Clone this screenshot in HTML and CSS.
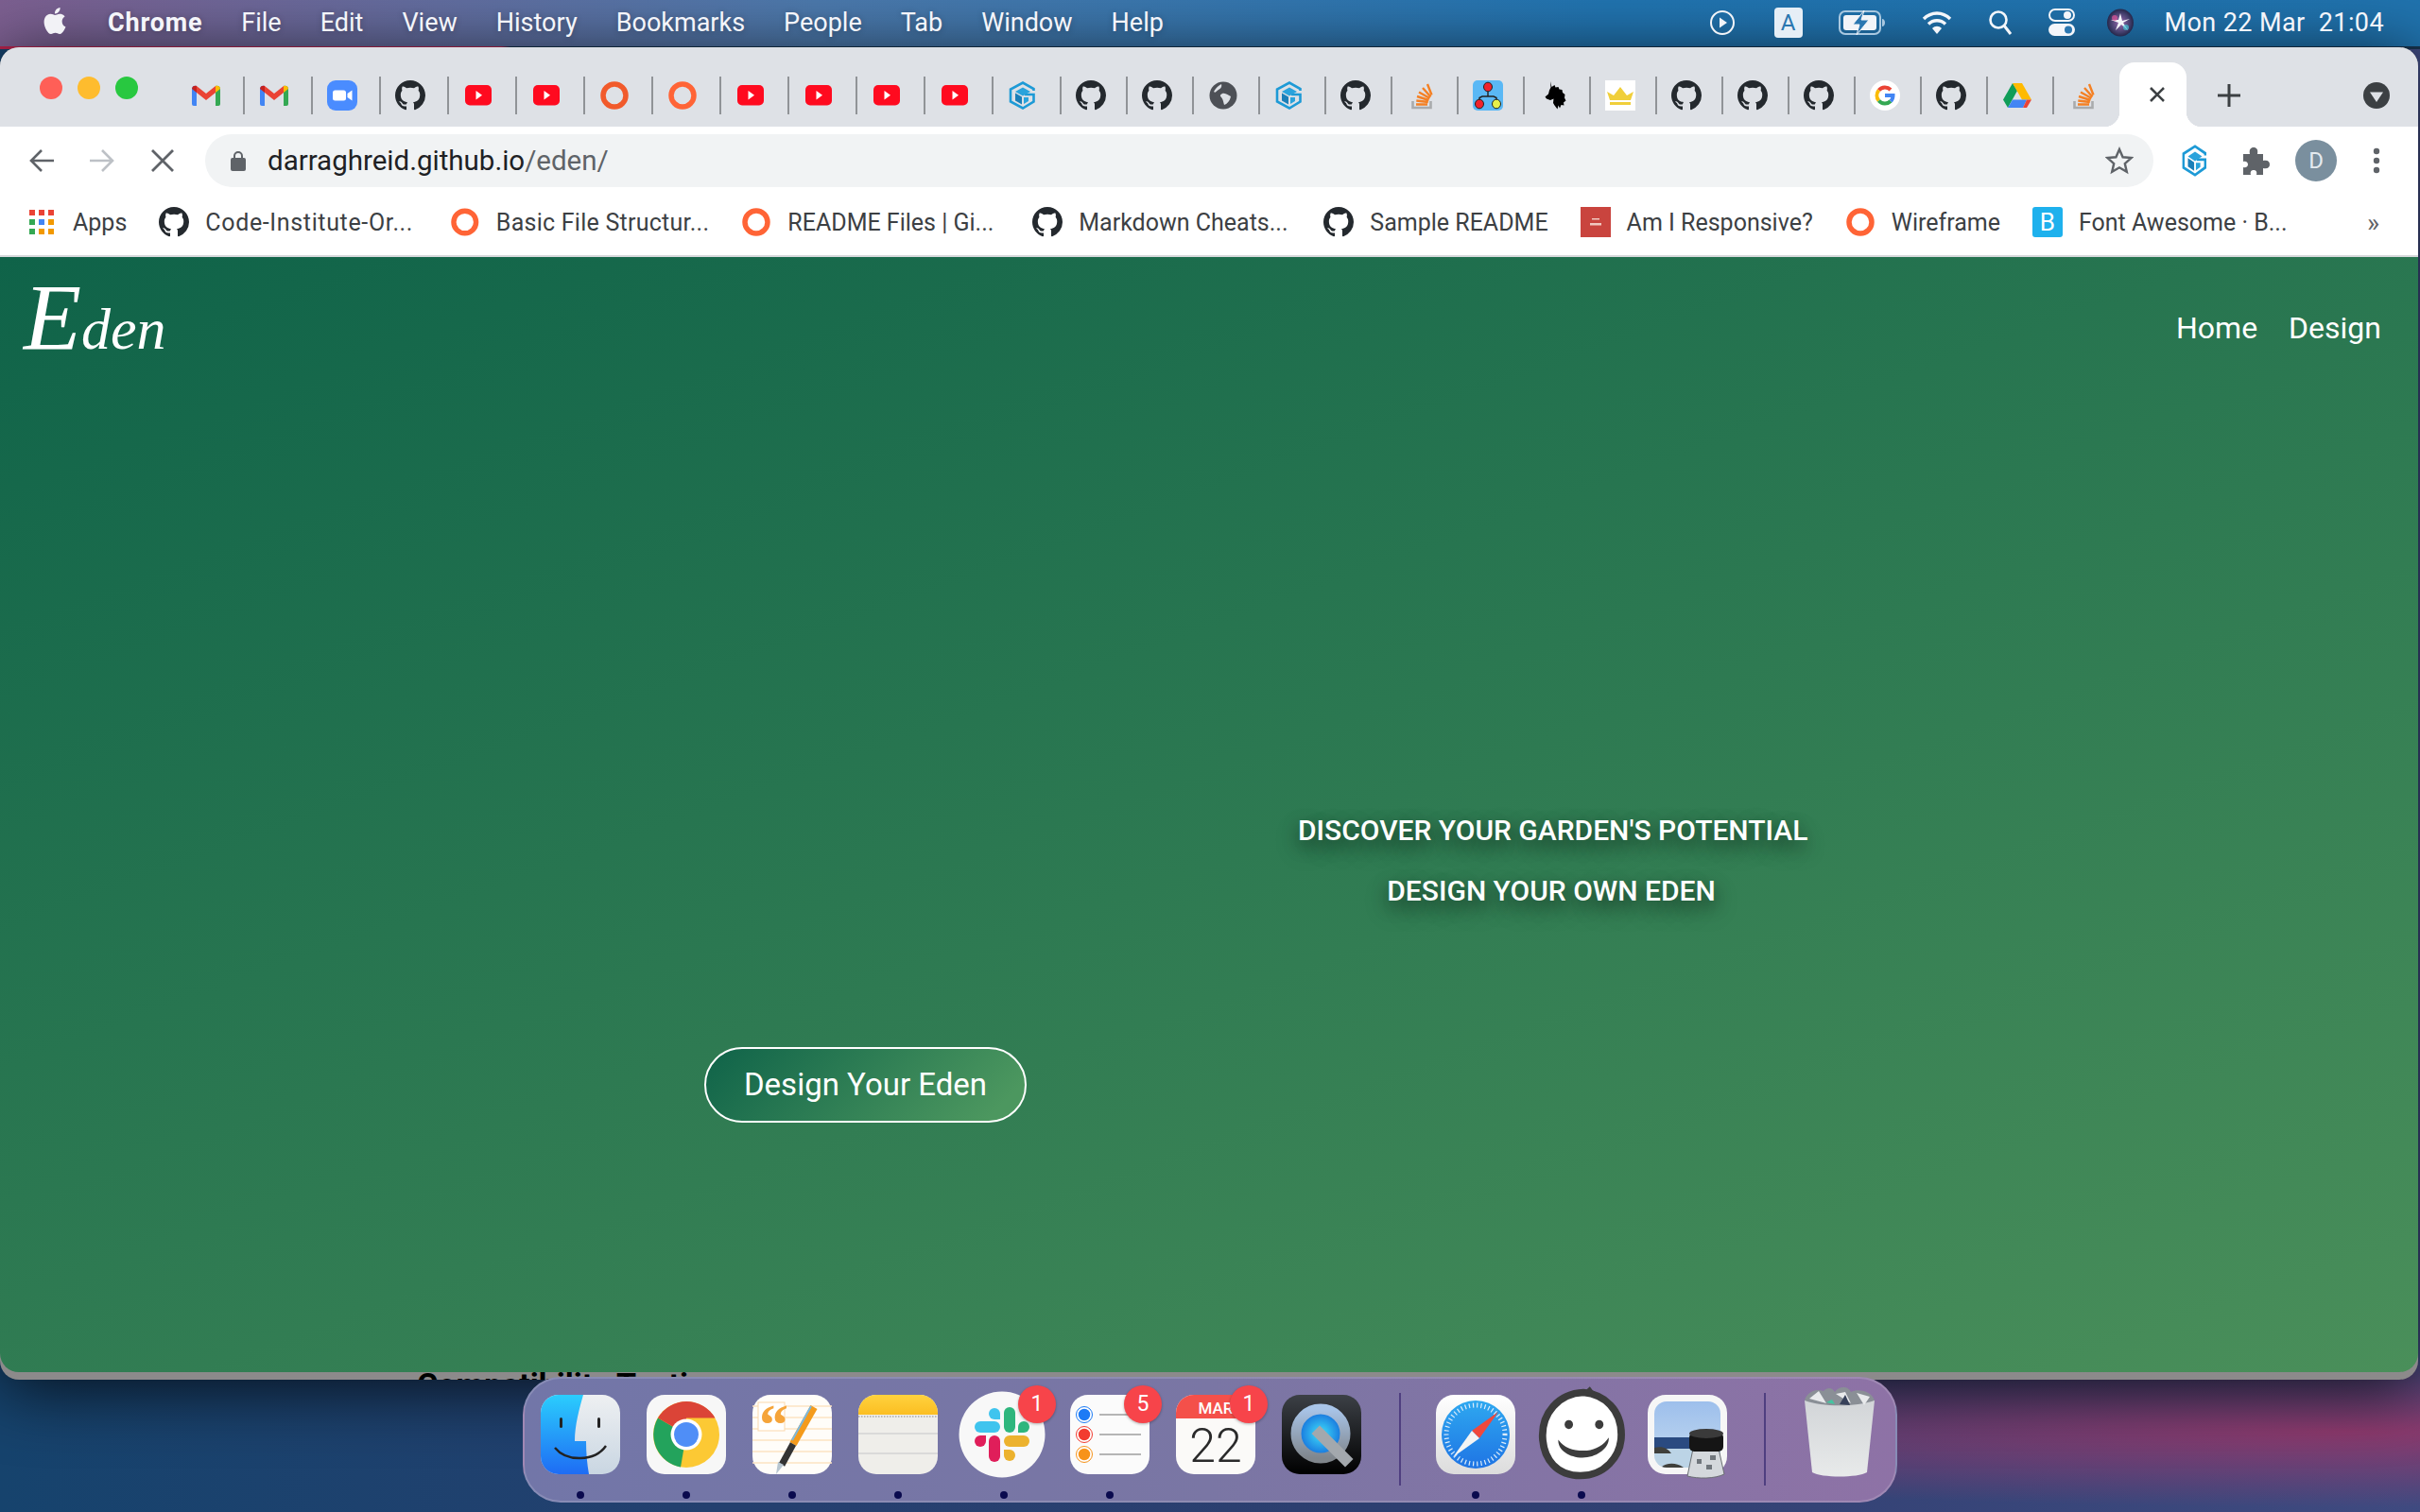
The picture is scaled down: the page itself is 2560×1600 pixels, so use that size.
FILE: index.html
```html
<!DOCTYPE html>
<html lang="en">

<head>
  <meta charset="UTF-8">
  <meta name="viewport" content="width=device-width, initial-scale=1.0">
  <link rel="stylesheet" href="styles.css">
  <title>Eden</title>
</head>

<body>
  <!-- shared tab and bookmark icons -->
  <svg class="sprites" width="0" height="0">
    <symbol id="i-gmail" viewBox="0 0 32 32">
      <path fill="#4285f4" d="M1 9c0-3 3-4 5-3v21H3a2 2 0 0 1-2-2z"/>
      <path fill="#34a853" d="M31 9c0-3-3-4-5-3v21h3a2 2 0 0 0 2-2z"/>
      <path fill="#ea4335" d="M6 6l10 8 10-8v7l-10 8-10-8z"/>
      <path fill="#c5221f" d="M1 9c0-3 3-4 5-3v7z"/>
      <path fill="#fbbc04" d="M31 9c0-3-3-4-5-3v7z"/>
    </symbol>
    <symbol id="i-zoom" viewBox="0 0 32 32">
      <rect width="32" height="32" rx="9" fill="#4a8cff"/>
      <rect x="6" y="10.5" width="14" height="11" rx="2.5" fill="#fff"/>
      <path fill="#fff" d="M21.5 14l5-3.5v11l-5-3.5z"/>
    </symbol>
    <symbol id="i-github" viewBox="0 0 16 16">
      <path fill="#24292e" fill-rule="evenodd" d="M8 0C3.58 0 0 3.58 0 8c0 3.54 2.29 6.53 5.47 7.59.4.07.55-.17.55-.38 0-.19-.01-.82-.01-1.49-2.01.37-2.53-.49-2.69-.94-.09-.23-.48-.94-.82-1.13-.28-.15-.68-.52-.01-.53.63-.01 1.08.58 1.23.82.72 1.21 1.87.87 2.33.66.07-.52.28-.87.51-1.07-1.78-.2-3.64-.89-3.64-3.95 0-.87.31-1.59.82-2.15-.08-.2-.36-1.02.08-2.12 0 0 .67-.21 2.2.82.64-.18 1.32-.27 2-.27.68 0 1.36.09 2 .27 1.53-1.04 2.2-.82 2.2-.82.44 1.1.16 1.92.08 2.12.51.56.82 1.27.82 2.15 0 3.07-1.87 3.75-3.65 3.95.29.25.54.73.54 1.48 0 1.07-.01 1.93-.01 2.2 0 .21.15.46.55.38A8.013 8.013 0 0016 8c0-4.42-3.58-8-8-8z"/>
    </symbol>
    <symbol id="i-youtube" viewBox="0 0 32 32">
      <rect x="2" y="5" width="28" height="21.5" rx="5" fill="#ff0a1f"/>
      <path fill="#fff" d="M13.5 11l6.5 4.8-6.5 4.8z"/>
    </symbol>
    <symbol id="i-ring" viewBox="0 0 32 32">
      <circle cx="16" cy="16" r="12" fill="none" stroke="#f15a2b" stroke-width="5.5"/>
    </symbol>
    <symbol id="i-ring-light" viewBox="0 0 32 32">
      <circle cx="16" cy="16" r="12" fill="none" stroke="#ff6436" stroke-width="5.5"/>
    </symbol>
    <symbol id="i-hex" viewBox="0 0 32 32">
      <path fill="none" stroke="#1d9ad6" stroke-width="2.6" d="M27.5 11V9L16 2.5 3 9.5v13l13 7 11.5-7V15H18"/>
      <path fill="#2aa3dc" d="M8 12l8-4.5 8 4.5-8 4.500z"/>
      <path fill="#1b7fb8" d="M8 13.5l7 4v8l-7-4z"/>
      <path fill="#2aa3dc" d="M17 18h5v4l-5 3z"/>
    </symbol>
    <symbol id="i-globe" viewBox="0 0 32 32">
      <circle cx="16" cy="16" r="14.5" fill="#4d5056"/>
      <path fill="#dee1e6" d="M6 12c3-5 6-7 8-8 1 3-1 5-3 6s-3 4-5 2zM15 14c4-1 6 2 9 3-1 5-4 8-7 9-1-3-1-6-3-8s-1-3 1-4z"/>
    </symbol>
    <symbol id="i-stack" viewBox="0 0 32 32">
      <path fill="none" stroke="#a9abad" stroke-width="2.6" d="M6.5 22v7h19v-7"/>
      <g fill="none" stroke="#f48024" stroke-width="2.4">
        <path d="M10 25.5h12M10.3 21.5l12.5 1.5M11 17l12.5 4M13 12.5l11.5 6.5M17 8l8.5 9.5M22 4l4.5 11.5"/>
      </g>
    </symbol>
    <symbol id="i-tree" viewBox="0 0 32 32">
      <rect width="32" height="32" rx="5" fill="#5ab8f5"/>
      <path fill="none" stroke="#222" stroke-width="1.4" d="M16 12v5M7 21v-2.500l3-1.500h12l3 1.500V21"/>
      <ellipse cx="16" cy="7" rx="4.500" ry="4.800" fill="#f0222c" stroke="#222"/>
      <ellipse cx="7" cy="25" rx="4.500" ry="4.800" fill="#f0222c" stroke="#222"/>
      <ellipse cx="25" cy="25" rx="4.500" ry="4.800" fill="#e8f04a" stroke="#222"/>
    </symbol>
    <symbol id="i-wolf" viewBox="0 0 32 32">
      <path fill="#000" d="M12 1l1.500 6 3-2 1 2.500 3-.5 1 2.500 3 .5.500 3 2.500 2-.5 3.500 1.500 3-2.500 2 .5 3-3-.5-1.500 3.500-1.500-3-1 4-3-4-1.500-2.500.5-4.500-3.500 1.500-4-1.500-1.500-2 3.500-3 1-4 1.500-3z"/>
    </symbol>
    <symbol id="i-crown" viewBox="0 0 32 32">
      <rect width="32" height="32" fill="#fff"/>
      <path fill="#f0cf3a" d="M5 21L2 12l7 4 7-9 7 9 7-4-3 9zM5 23h22v3H5z"/>
    </symbol>
    <symbol id="i-google" viewBox="0 0 32 32">
      <circle cx="16" cy="16" r="16" fill="#fff"/>
      <g fill="none" stroke-width="4">
        <path stroke="#ea4335" d="M22 10a8.500 8.500 0 0 0-12.500.5"/>
        <path stroke="#fbbc05" d="M9.500 10.500a8.500 8.500 0 0 0 0 11"/>
        <path stroke="#34a853" d="M9.500 21.500A8.500 8.500 0 0 0 22 22"/>
        <path stroke="#4285f4" d="M22 22c2-1.500 2.500-4 2.500-6H16"/>
      </g>
    </symbol>
    <symbol id="i-drive" viewBox="0 0 32 32">
      <path fill="#0f9d58" d="M11 3L1 20.500 6 29l10-18z"/>
      <path fill="#ffba00" d="M11 3h10l10 17.500H21z"/>
      <path fill="#4285f4" d="M11 20.500h15L22 29H6z"/>
      <path fill="#ea4335" d="M26 20.500h5L26 29h-4z"/>
    </symbol>
  </svg>

  <header class="menubar">
    <svg class="apple" viewBox="0 0 24 24" width="28" height="30"><path fill="#f2f2f6" d="M12.152 6.896c-.948 0-2.415-1.078-3.96-1.04-2.04.027-3.91 1.183-4.961 3.014-2.117 3.675-.546 9.103 1.519 12.09 1.013 1.454 2.208 3.09 3.792 3.039 1.52-.065 2.09-.987 3.935-.987 1.831 0 2.35.987 3.96.948 1.637-.026 2.676-1.48 3.676-2.948 1.156-1.688 1.636-3.325 1.662-3.415-.039-.013-3.182-1.221-3.22-4.857-.026-3.04 2.48-4.494 2.597-4.559-1.429-2.09-3.623-2.324-4.39-2.376-2-.156-3.675 1.09-4.61 1.09zM15.53 3.83c.843-1.012 1.4-2.427 1.245-3.83-1.207.052-2.662.805-3.532 1.818-.78.896-1.454 2.338-1.273 3.714 1.338.104 2.715-.688 3.559-1.701"/></svg>
    <nav class="menu">
      <b>Chrome</b><span>File</span><span>Edit</span><span>View</span><span>History</span><span>Bookmarks</span><span>People</span><span>Tab</span><span>Window</span><span>Help</span>
    </nav>
    <div class="status">
      <svg class="play" viewBox="0 0 28 28" width="28" height="28"><circle cx="14" cy="14" r="12" fill="none" stroke="#f2f4f8" stroke-width="2"/><path fill="#f2f4f8" d="M11 8.500l8 5.500-8 5.500z"/></svg>
      <span class="input-source">A</span>
      <svg viewBox="0 0 50 28" width="50" height="28"><rect x="1" y="2" width="43" height="24" rx="6" fill="none" stroke="#a9c8e0" stroke-width="2"/><rect x="5" y="6" width="35" height="16" rx="3" fill="#f2f4f8"/><path fill="#a9c8e0" d="M46 10c2 0 3 2 3 4s-1 4-3 4z"/><path fill="#2a76b0" stroke="#f2f4f8" d="M27 1L15 16h7l-3 11 13-16h-8z"/></svg>
      <svg viewBox="0 0 32 28" width="32" height="28"><g fill="none" stroke="#f4f6fa" stroke-width="3.400"><path d="M2 10c8-8 20-8 28 0"/><path d="M7 15.500c5-5 13-5 18 0"/></g><path fill="#f4f6fa" d="M11 20c3-3 7-3 10 0l-5 6z"/></svg>
      <svg viewBox="0 0 26 28" width="26" height="28"><circle cx="11" cy="11" r="8.500" fill="none" stroke="#f4f6fa" stroke-width="2.600"/><path stroke="#f4f6fa" stroke-width="3" d="M17 17l7 9"/></svg>
      <svg viewBox="0 0 28 32" width="28" height="32"><rect x="1" y="2" width="26" height="12" rx="6" fill="none" stroke="#f4f6fa" stroke-width="2"/><circle cx="20" cy="8" r="4" fill="#f4f6fa"/><rect y="17" width="28" height="13" rx="6.500" fill="#f4f6fa"/><circle cx="21" cy="23.500" r="4" fill="#2a76b0"/></svg>
      <svg class="siri" viewBox="0 0 28 30" width="28" height="30"><defs><radialGradient id="siri-bg"><stop offset="0" stop-color="#9a6ab0"/><stop offset=".7" stop-color="#45406e"/><stop offset="1" stop-color="#25274a"/></radialGradient></defs><ellipse cx="14" cy="15" rx="14" ry="14.500" fill="url(#siri-bg)"/><path fill="#f4f6fa" d="M14 5l2 8 8-2-7 4 5 8-7-6-6 6 3-8-8-3 8 0z"/><circle cx="8" cy="10" r="3" fill="#e0559a" opacity=".7"/><circle cx="20" cy="20" r="3" fill="#46c4d8" opacity=".7"/></svg>
      <span class="clock">Mon 22 Mar&nbsp; 21:04</span>
    </div>
  </header>

  <div class="window">
    <div class="tabstrip">
      <div class="lights"><i class="red"></i><i class="yellow"></i><i class="green"></i></div>
      <div class="tabs">
        <div class="tab wide"><svg><use href="#i-gmail"/></svg></div>
        <div class="tab wide"><svg><use href="#i-gmail"/></svg></div>
        <div class="tab wide"><svg><use href="#i-zoom"/></svg></div>
        <div class="tab wide"><svg><use href="#i-github"/></svg></div>
        <div class="tab wide"><svg><use href="#i-youtube"/></svg></div>
        <div class="tab wide"><svg><use href="#i-youtube"/></svg></div>
        <div class="tab wide"><svg><use href="#i-ring"/></svg></div>
        <div class="tab wide"><svg><use href="#i-ring-light"/></svg></div>
        <div class="tab wide"><svg><use href="#i-youtube"/></svg></div>
        <div class="tab wide"><svg><use href="#i-youtube"/></svg></div>
        <div class="tab wide"><svg><use href="#i-youtube"/></svg></div>
        <div class="tab wide"><svg><use href="#i-youtube"/></svg></div>
        <div class="tab wide"><svg><use href="#i-hex"/></svg></div>
        <div class="tab"><svg><use href="#i-github"/></svg></div>
        <div class="tab"><svg><use href="#i-github"/></svg></div>
        <div class="tab"><svg><use href="#i-globe"/></svg></div>
        <div class="tab"><svg><use href="#i-hex"/></svg></div>
        <div class="tab"><svg><use href="#i-github"/></svg></div>
        <div class="tab"><svg><use href="#i-stack"/></svg></div>
        <div class="tab"><svg><use href="#i-tree"/></svg></div>
        <div class="tab"><svg><use href="#i-wolf"/></svg></div>
        <div class="tab"><svg><use href="#i-crown"/></svg></div>
        <div class="tab"><svg><use href="#i-github"/></svg></div>
        <div class="tab"><svg><use href="#i-github"/></svg></div>
        <div class="tab"><svg><use href="#i-github"/></svg></div>
        <div class="tab"><svg><use href="#i-google"/></svg></div>
        <div class="tab"><svg><use href="#i-github"/></svg></div>
        <div class="tab"><svg><use href="#i-drive"/></svg></div>
        <div class="tab last"><svg><use href="#i-stack"/></svg></div>
      </div>
      <div class="tab-active">
        <svg viewBox="0 0 20 20" width="20" height="20"><path stroke="#3c4043" stroke-width="2.600" d="M3 3l14 14M17 3L3 17"/></svg>
      </div>
      <svg class="new-tab" viewBox="0 0 24 24" width="24" height="24"><path stroke="#3c4043" stroke-width="3" d="M12 0v24M0 12h24"/></svg>
      <svg class="tab-search" viewBox="0 0 28 28" width="28" height="28"><circle cx="14" cy="14" r="14" fill="#3c4043"/><path fill="#dee1e6" d="M7 10.500h14L14 21z"/></svg>
    </div>

    <div class="toolbar">
      <div class="nav-btn"><svg viewBox="0 0 28 28" width="28" height="28"><path fill="none" stroke="#5f6368" stroke-width="2.600" d="M14 3L3 14l11 11M3 14h24"/></svg></div>
      <div class="nav-btn"><svg viewBox="0 0 28 28" width="28" height="28"><path fill="none" stroke="#bdc1c6" stroke-width="2.600" d="M14 3l11 11-11 11M25 14H1"/></svg></div>
      <div class="nav-btn"><svg viewBox="0 0 26 26" width="26" height="26"><path stroke="#5f6368" stroke-width="2.800" d="M2 2l22 22M24 2L2 24"/></svg></div>
      <div class="omnibox">
        <svg viewBox="0 0 16 22" width="16" height="22"><path fill="none" stroke="#5f6368" stroke-width="2" d="M4 10V6a4 4 0 0 1 8 0v4"/><rect y="8" width="16" height="14" rx="2" fill="#5f6368"/></svg>
        <div class="url">darraghreid.github.io<span>/eden/</span></div>
        <svg class="star" viewBox="0 0 30 30" width="30" height="30"><path fill="none" stroke="#5f6368" stroke-width="2.400" d="M15 3l3.600 8.300 9 .8-6.800 6 2 8.800-7.800-4.600-7.800 4.600 2-8.800-6.800-6 9-.8z"/></svg>
      </div>
      <div class="ext-btn"><svg width="30" height="36" viewBox="0 0 32 32" preserveAspectRatio="none"><use href="#i-hex"/></svg></div>
      <div class="ext-btn"><svg viewBox="0 0 30 30" width="30" height="30"><path fill="#5f6368" d="M2 8h7c-1-5 1-7 4-7s5 2 4 7h6v7c5-1 7 1 7 4s-2 5-7 4v7h-7c1-4-1-5-3-5s-4 1-3 5H2v-8c3 1 5-1 5-3s-2-4-5-3z"/></svg></div>
      <div class="ext-btn"><div class="avatar">D</div></div>
      <div class="ext-btn"><svg viewBox="0 0 8 28" width="8" height="28"><circle cx="4" cy="4" r="3.200" fill="#5f6368"/><circle cx="4" cy="14" r="3.200" fill="#5f6368"/><circle cx="4" cy="24" r="3.200" fill="#5f6368"/></svg></div>
    </div>

    <div class="bookmarks">
      <a class="bm"><svg class="apps" viewBox="0 0 26 26"><rect width="6" height="6" fill="#ea4335"/><rect x="10" width="6" height="6" fill="#ea4335"/><rect x="20" width="6" height="6" fill="#ea4335"/><rect y="10" width="6" height="6" fill="#34a853"/><rect x="10" y="10" width="6" height="6" fill="#4285f4"/><rect x="20" y="10" width="6" height="6" fill="#f29900"/><rect y="20" width="6" height="6" fill="#34a853"/><rect x="10" y="20" width="6" height="6" fill="#f29900"/><rect x="20" y="20" width="6" height="6" fill="#f29900"/></svg>Apps</a>
      <a class="bm cut code"><svg><use href="#i-github"/></svg>Code-Institute-Or...</a>
      <a class="bm cut basic"><svg><use href="#i-ring-light"/></svg>Basic File Structur...</a>
      <a class="bm cut"><svg><use href="#i-ring-light"/></svg>README Files | Gi...</a>
      <a class="bm cut"><svg><use href="#i-github"/></svg>Markdown Cheats...</a>
      <a class="bm"><svg><use href="#i-github"/></svg>Sample README</a>
      <a class="bm"><svg viewBox="0 0 32 32"><rect width="32" height="32" fill="#c9443e"/><path fill="#f0c8c0" d="M12 12h8v1.500h-8zM10 17h12v2.500H10z"/></svg>Am I Responsive?</a>
      <a class="bm"><svg><use href="#i-ring-light"/></svg>Wireframe</a>
      <a class="bm"><span class="bootstrap">B</span>Font Awesome · B...</a>
      <span class="more">»</span>
    </div>

    <main class="page">
      <div class="site-nav">
        <div class="logo"><span>E</span>den</div>
        <nav class="site-links"><a>Home</a><a>Design</a></nav>
      </div>
      <div class="hero">
        <a class="cta">Design Your Eden</a>
        <div class="tagline">
          <p>DISCOVER YOUR GARDEN'S POTENTIAL</p>
          <p>DESIGN YOUR OWN EDEN</p>
        </div>
      </div>
    </main>

    <div class="under-page">Compatibility Testing</div>
  </div>

  <footer class="dock">
    <div class="dock-item running">
      <svg viewBox="0 0 84 84">
        <defs>
          <linearGradient id="f-blue" x2="0" y2="1"><stop offset="0" stop-color="#2bcdfd"/><stop offset="1" stop-color="#1e6cf4"/></linearGradient>
          <linearGradient id="f-grey" x2="0" y2="1"><stop offset="0" stop-color="#eef0f2"/><stop offset="1" stop-color="#c9d6e2"/></linearGradient>
          <clipPath id="f-clip"><rect width="84" height="84" rx="19"/></clipPath>
        </defs>
        <g clip-path="url(#f-clip)">
          <rect width="84" height="84" fill="url(#f-grey)"/>
          <path fill="url(#f-blue)" d="M0 0h45c-4 14-9 32-9 49h12c0 12 1 24 3 35H0z"/>
        </g>
        <rect x="20" y="24" width="3" height="11" rx="1.500" fill="#222"/>
        <rect x="60" y="24" width="3" height="11" rx="1.500" fill="#222"/>
        <path fill="none" stroke="#222" stroke-width="2.400" d="M15 56c12 15 42 15 54-2"/>
      </svg>
    </div>
    <div class="dock-item running">
      <svg viewBox="0 0 84 84">
        <rect width="84" height="84" rx="19" fill="#f7f7f7"/>
        <circle cx="42" cy="42" r="35" fill="#fcc934"/>
        <path fill="#23a35c" d="M42 42L12 24.500A35 35 0 0 0 36 76.500z"/>
        <path fill="#db4437" d="M42 42L12 24.500A35 35 0 0 1 72.500 24.500H42z"/>
        <circle cx="42" cy="42" r="16.500" fill="#fff"/>
        <circle cx="42" cy="42" r="13" fill="#4f8ef7"/>
      </svg>
    </div>
    <div class="dock-item running">
      <svg viewBox="0 0 84 84">
        <rect width="84" height="84" rx="19" fill="#fffdf9"/>
        <path stroke="#fde3c2" stroke-width="1.600" d="M0 12h84M0 24h84M0 36h84M0 48h84M0 60h84M0 72h84"/>
        <rect x="6" y="8" width="28" height="30" fill="#fff" stroke="#fbd9ae"/>
        <text class="quote" x="7" y="52">“</text>
        <path stroke="#f49b1c" stroke-width="8" d="M65 13L43 52"/>
        <path stroke="#7ab8e0" stroke-width="2" d="M62 12L42 48"/>
        <path stroke="#333" stroke-width="7" d="M43 52L31 74"/>
        <path fill="#b8c6d0" d="M27 71l6 3-8 10z"/>
      </svg>
    </div>
    <div class="dock-item running">
      <svg viewBox="0 0 84 84">
        <defs>
          <linearGradient id="n-top" x2="0" y2="1"><stop offset="0" stop-color="#ffd23e"/><stop offset="1" stop-color="#fbbe22"/></linearGradient>
          <clipPath id="n-clip"><rect width="84" height="84" rx="19"/></clipPath>
        </defs>
        <g clip-path="url(#n-clip)">
          <rect width="84" height="84" fill="#efeeea"/>
          <rect width="84" height="21" fill="url(#n-top)"/>
          <path stroke="#aaa" stroke-width="1.500" stroke-dasharray="1.500 1.500" d="M0 23h84"/>
          <path stroke="#d4d4d4" stroke-width="1.500" d="M0 41h84M0 62h84"/>
        </g>
      </svg>
    </div>
    <div class="dock-item running">
      <svg viewBox="0 0 84 84">
        <circle cx="40" cy="42" r="45.500" fill="#f8f8f8"/>
        <g fill="none" stroke-width="12" stroke-linecap="round">
          <path stroke="#3fc4ee" d="M17 34h15"/>
          <path stroke="#2eb67d" d="M48 19v15"/>
          <path stroke="#e01e5a" d="M32 49v16"/>
          <path stroke="#ecb22e" d="M48 49h15"/>
        </g>
        <path fill="#3fc4ee" d="M38 26h-6a6 6 0 1 1 6-6z"/>
        <path fill="#2eb67d" d="M57 40v-6a6 6 0 1 1 6 6z"/>
        <path fill="#e01e5a" d="M23 43v6a6 6 0 1 1-6-6z"/>
        <path fill="#ecb22e" d="M42 58h6a6 6 0 1 1-6 6z"/>
      </svg>
      <span class="badge">1</span>
    </div>
    <div class="dock-item running">
      <svg viewBox="0 0 84 84">
        <rect width="84" height="84" rx="19" fill="#fbfbfb"/>
        <circle cx="15" cy="21" r="7" fill="#1d7bf5" stroke="#fff" stroke-width="1.500"/><circle cx="15" cy="21" r="8.500" fill="none" stroke="#1d7bf5"/>
        <circle cx="15" cy="42" r="7" fill="#f23c30" stroke="#fff" stroke-width="1.500"/><circle cx="15" cy="42" r="8.500" fill="none" stroke="#f23c30"/>
        <circle cx="15" cy="63" r="7" fill="#f7931a" stroke="#fff" stroke-width="1.500"/><circle cx="15" cy="63" r="8.500" fill="none" stroke="#f7931a"/>
        <path stroke="#b5b5b5" stroke-width="2" d="M31 21h44M31 42h44M31 63h44"/>
      </svg>
      <span class="badge">5</span>
    </div>
    <div class="dock-item">
      <svg viewBox="0 0 84 84">
        <defs><clipPath id="c-clip"><rect width="84" height="84" rx="19"/></clipPath></defs>
        <g clip-path="url(#c-clip)">
          <rect width="84" height="84" fill="#fbfaf8"/>
          <rect width="84" height="25" fill="#f4504a"/>
        </g>
        <text class="cal-month" x="42" y="20">MAR</text>
        <text class="cal-day" x="42" y="71">22</text>
      </svg>
      <span class="badge">1</span>
    </div>
    <div class="dock-item">
      <svg viewBox="0 0 84 84">
        <defs>
          <linearGradient id="q-bg" x2="0" y2="1"><stop offset="0" stop-color="#3c4046"/><stop offset="1" stop-color="#000"/></linearGradient>
          <linearGradient id="q-ring" x2="0" y2="1"><stop offset="0" stop-color="#a8c4e8"/><stop offset="1" stop-color="#80868c"/></linearGradient>
          <radialGradient id="q-eye"><stop offset="0" stop-color="#3fe0fb"/><stop offset="1" stop-color="#1264d8"/></radialGradient>
        </defs>
        <rect width="84" height="84" rx="19" fill="url(#q-bg)"/>
        <circle cx="41" cy="41" r="26" fill="url(#q-eye)" stroke="url(#q-ring)" stroke-width="11"/>
        <path stroke="#a3a8ad" stroke-width="12" stroke-linecap="square" d="M40 41l27 27"/>
      </svg>
    </div>
    <i class="dock-sep"></i>
    <div class="dock-item running">
      <svg viewBox="0 0 84 84">
        <defs>
          <linearGradient id="s-bg" x2="0" y2="1"><stop offset="0" stop-color="#fff"/><stop offset="1" stop-color="#dcdcdc"/></linearGradient>
          <linearGradient id="s-blue" x2="0" y2="1"><stop offset="0" stop-color="#2ea8f0"/><stop offset="1" stop-color="#1f74e4"/></linearGradient>
        </defs>
        <rect width="84" height="84" rx="19" fill="url(#s-bg)"/>
        <circle cx="42" cy="42" r="36" fill="url(#s-blue)"/>
        <circle cx="42" cy="42" r="31" fill="none" stroke="#dcecfa" stroke-width="5" stroke-dasharray="1.200 3"/>
        <path fill="#f0483c" d="M66 18L38 38l8 8z"/>
        <path fill="#f4f4f4" d="M18 66l28-20-8-8z"/>
      </svg>
    </div>
    <div class="dock-item running">
      <svg viewBox="0 0 84 84">
        <g transform="translate(-2.500 -3.500) scale(1.110 1.060)">
          <path fill="#fff" stroke="#3c3c3c" stroke-width="7" d="M42 1C18 2 2 22 3 46c1 22 14 38 36 38 22 0 39-18 39-41C78 18 62 3 42 1z"/>
          <path fill="#3c3c3c" d="M42 1l6-6 5 7z"/>
          <ellipse cx="28" cy="33" rx="4" ry="4.500" fill="#3c3c3c"/>
          <ellipse cx="57" cy="33" rx="4" ry="4.500" fill="#3c3c3c"/>
          <path fill="#3c3c3c" d="M18 48c5 8 13 11 24 11 10 0 18-4 24-13 1 10-11 20-25 20-13 0-24-8-23-18z"/>
        </g>
      </svg>
    </div>
    <div class="dock-item">
      <svg viewBox="0 0 84 84">
        <defs>
          <linearGradient id="p-sky" x2="0" y2="1"><stop offset="0" stop-color="#9dbfec"/><stop offset="1" stop-color="#b4cfee"/></linearGradient>
          <clipPath id="p-clip"><rect x="7" y="7" width="70" height="70" rx="13"/></clipPath>
        </defs>
        <rect width="84" height="84" rx="19" fill="#f6f6f6"/>
        <g clip-path="url(#p-clip)">
          <rect x="7" y="7" width="70" height="40" fill="url(#p-sky)"/>
          <rect x="7" y="45" width="70" height="14" fill="#2a4a80"/>
          <rect x="7" y="57" width="70" height="20" fill="#bcd4e6"/>
          <path fill="#40403c" d="M7 56c8-2 14 0 18 6H7zM14 77c6-6 18-5 24 0z"/>
        </g>
        <path fill="#d4d8dc" stroke="#6a6e72" d="M42 86l6-29h27l6 27c-10 5-28 5-39 2z"/>
        <path fill="#70767c" d="M52 68h5v5h-5zM62 74h6v5h-6zM66 64h6v5h-6z"/>
        <rect x="44" y="40" width="36" height="20" rx="5" fill="#151515"/>
        <ellipse cx="62" cy="41" rx="18" ry="5" fill="#3a3a3a"/>
      </svg>
    </div>
    <i class="dock-sep"></i>
    <div class="dock-item">
      <svg viewBox="0 0 84 84">
        <defs><linearGradient id="t-bg" x2="0" y2="1"><stop offset="0" stop-color="#d2d5d8"/><stop offset="1" stop-color="#e8eaea"/></linearGradient></defs>
        <path fill="url(#t-bg)" d="M4 6h74l-8 76c-10 6-48 6-58 0z"/>
        <path fill="#8a8f96" d="M4 6c1-6 9-14 20-10 4-4 9-4 12 1 4-6 14-7 17 0 8-4 22-1 25 9-20 7-55 7-74 0z"/>
        <path fill="#e8eaec" d="M9 4l10-8 8 13zM37 -1l10-2 6 12zM59 -2l14 4-6 9z"/>
        <path fill="#44c4a0" d="M27 8l6-3 3 5z"/>
        <path fill="#37415a" d="M41 10l6-10 5 11z"/>
      </svg>
    </div>
  </footer>
</body>

</html>
```

FILE: styles.css
```css
* {
  box-sizing: border-box;
}

body {
  margin: 0;
  width: 2560px;
  height: 1600px;
  position: relative;
  overflow: hidden;
  font-family: 'Roboto', 'Liberation Sans', sans-serif;
  /* wallpaper only shows round the window */
  background:
    linear-gradient(to right, #b8254f 0, #b8254f 530px, #17344f 540px) 0 0 / 100% 52px no-repeat,
    radial-gradient(ellipse 1050px 80px at 2480px 1515px, #8e3a6e, transparent),
    linear-gradient(to right, #16436d 0, #24406f 30%, #2e3f70 60%, #3f4a80 100%);
}

.sprites {
  position: absolute;
}

/* menu bar */
.menubar {
  height: 49px;
  display: flex;
  align-items: center;
  padding: 0 38px 2px 44px;
  color: #f4f5fa;
  font-size: 27px;
  background: linear-gradient(to right, #7c5f90 0, #4c79ac 860px, #2174b0 1700px, #2073ae 100%);
}

.apple {
  margin-top: -3px;
}

.menu {
  display: flex;
  gap: 41px;
  margin-left: 42px;
  text-shadow: 0 1px 6px rgba(0, 0, 0, 0.25);
}

.menu b {
  font-weight: 700;
  letter-spacing: 0.8px;
}

.status {
  display: flex;
  align-items: center;
  gap: 38px;
  margin-left: auto;
}

.play {
  margin-right: 3px;
}

.input-source {
  width: 30px;
  height: 32px;
  line-height: 32px;
  text-align: center;
  border-radius: 4px;
  background: #e6eef6;
  color: #2a76b0;
  font-size: 24px;
}

.siri {
  margin-left: -4px;
}

.clock {
  margin-left: -5px;
  white-space: nowrap;
  font-size: 27px;
  letter-spacing: 0.4px;
}

/* browser window */
.window {
  width: 2558px;
  height: 1410px;
  margin-top: 1px;
  display: flex;
  flex-direction: column;
  overflow: hidden;
  border-radius: 20px;
  background: #8c8a8b;
  box-shadow: 0 10px 70px rgba(0, 0, 0, 0.75);
}

.tabstrip {
  height: 84px;
  flex: none;
  display: flex;
  align-items: center;
  background: #dee1e6;
}

.lights {
  display: flex;
  gap: 16px;
  width: 187px;
  padding-left: 42px;
  margin-top: 2px;
}

.lights i {
  width: 24px;
  height: 24px;
  border-radius: 50%;
}

.lights .red {
  background: #ff5f57;
}

.lights .yellow {
  background: #febc2e;
}

.lights .green {
  background: #28c840;
}

.tabs {
  display: flex;
  margin-top: 17px;
}

.tab {
  width: 70px;
  height: 40px;
  display: flex;
  align-items: center;
  padding-left: 15px;
  border-right: 2px solid #909397;
}

.tab.wide {
  width: 72px;
}

.tab.last {
  width: 69px;
  border-right: 0;
}

.tab svg {
  width: 32px;
  height: 32px;
}

.tab-active {
  width: 71px;
  height: 68px;
  align-self: flex-end;
  position: relative;
  display: flex;
  align-items: center;
  justify-content: center;
  padding-left: 9px;
  background: #fff;
  border-radius: 16px 16px 0 0;
}

.tab-active::before,
.tab-active::after {
  content: "";
  position: absolute;
  bottom: 0;
  width: 16px;
  height: 16px;
}

.tab-active::before {
  left: -16px;
  background: radial-gradient(circle at 0 0, transparent 16px, #fff 16.5px);
}

.tab-active::after {
  right: -16px;
  background: radial-gradient(circle at 100% 0, transparent 16px, #fff 16.5px);
}

.new-tab {
  margin: 17px 0 0 33px;
}

.tab-search {
  margin: 17px 0 0 130px;
}

.toolbar {
  height: 71px;
  flex: none;
  display: flex;
  align-items: center;
  padding: 0 12px;
  background: #fff;
}

.nav-btn,
.ext-btn {
  width: 64px;
  display: flex;
  justify-content: center;
  align-items: center;
}

.omnibox {
  flex: 1;
  height: 56px;
  margin: 0 12px 0 13px;
  display: flex;
  align-items: center;
  gap: 23px;
  padding: 0 21px 0 27px;
  border-radius: 28px;
  background: #f1f3f4;
}

.url {
  font-size: 29.5px;
  color: #202124;
}

.url span {
  color: #5f6368;
}

.star {
  margin-left: auto;
}

.avatar {
  width: 44px;
  height: 44px;
  line-height: 44px;
  text-align: center;
  border-radius: 50%;
  background: #7a8f9e;
  color: #e4eaee;
  font-size: 24px;
}

.bookmarks {
  height: 67px;
  flex: none;
  display: flex;
  align-items: center;
  gap: 34px;
  padding: 0 0 5px 31px;
  background: #fff;
  border-bottom: 2px solid #d6d8db;
  color: #3c4043;
  font-size: 25px;
}

.bm {
  display: flex;
  align-items: center;
  gap: 17px;
  white-space: nowrap;
}

/* chrome gives truncated bookmarks a fixed width */
.bm.cut {
  width: 274px;
}

.bm.code {
  letter-spacing: 0.65px;
}

.bm.basic {
  letter-spacing: 0.25px;
}

.bm svg {
  width: 32px;
  height: 32px;
}

.bm svg.apps {
  width: 26px;
  height: 26px;
  margin-right: 3px;
}

.bootstrap {
  width: 32px;
  height: 32px;
  line-height: 32px;
  text-align: center;
  border-radius: 3px;
  background: #1eb1ed;
  color: #fff;
  font-size: 26px;
}

.more {
  margin-left: auto;
  margin-right: 41px;
  color: #5f6368;
  font-size: 28px;
}

/* the site itself */
.page {
  height: 1180px;
  flex: none;
  display: flex;
  flex-direction: column;
  border-radius: 0 0 20px 20px;
  background: linear-gradient(160deg, #0f6349 0%, #4a8f5a 100%);
  color: #fff;
  position: relative;
  z-index: 1;
}

.site-nav {
  height: 150px;
  flex: none;
  display: flex;
  align-items: center;
  justify-content: space-between;
  padding: 0 39px 0 25px;
}

.logo {
  margin-bottom: 22px;
  font-family: 'Liberation Serif', serif;
  font-style: italic;
  font-size: 62px;
  line-height: 1;
}

.logo span {
  font-size: 100px;
}

.site-links {
  display: flex;
  gap: 33px;
  font-size: 32px;
}

.hero {
  display: flex;
  padding-left: 745px;
}

.cta {
  width: 341px;
  height: 80px;
  margin-top: 686px;
  line-height: 76px;
  text-align: center;
  border: 2px solid #fff;
  border-radius: 40px;
  font-size: 33px;
  background: linear-gradient(135deg, #0f6349 0%, #4c975f 90%);
}

.tagline {
  width: 536px;
  margin: 425px 0 0 287px;
  text-align: center;
  white-space: nowrap;
  font-size: 30px;
  font-weight: 500;
  text-shadow: 0 6px 18px rgba(0, 0, 0, 0.45), 0 10px 28px rgba(0, 0, 0, 0.3);
}

.tagline p {
  margin: 0;
  line-height: 64px;
}

.under-page {
  height: 8px;
  flex: none;
  padding-left: 441px;
  overflow: hidden;
  font-size: 34px;
  line-height: 27px;
  font-weight: 700;
  color: #000;
  white-space: nowrap;
}

/* dock */
.dock {
  position: absolute;
  left: 553px;
  top: 1457px;
  width: 1454px;
  height: 133px;
  display: flex;
  gap: 28px;
  padding: 17px 0 0 17px;
  border: 2px solid rgba(255, 255, 255, 0.16);
  border-radius: 40px;
  background: linear-gradient(to right, #7276a8 0, #7a76a4 50%, #8e72a6 100%);
}

.dock-item {
  width: 84px;
  height: 84px;
  flex: none;
  position: relative;
}

.dock-item svg {
  width: 84px;
  height: 84px;
  overflow: visible;
  display: block;
}

.dock-item.running::after {
  content: "";
  position: absolute;
  left: 38px;
  top: 102px;
  width: 8px;
  height: 8px;
  border-radius: 50%;
  background: #0a0a4e;
}

.badge {
  position: absolute;
  left: 57px;
  top: -10px;
  width: 40px;
  height: 40px;
  line-height: 40px;
  text-align: center;
  border-radius: 50%;
  background: #f7444a;
  color: #fff;
  font-size: 23px;
  box-shadow: 0 1px 3px rgba(0, 0, 0, 0.3);
}

.dock-sep {
  width: 2px;
  height: 98px;
  flex: none;
  margin: -2px 9px 0 11.5px;
  align-self: flex-start;
  background: #4f3f80;
}

.quote {
  font-family: 'Liberation Serif', serif;
  font-weight: 700;
  font-size: 62px;
  fill: #f5a43a;
}

.cal-month {
  font-size: 17px;
  font-weight: 500;
  fill: #fff;
  text-anchor: middle;
}

.cal-day {
  font-size: 50px;
  font-weight: 300;
  fill: #2a2a2a;
  text-anchor: middle;
}
```
